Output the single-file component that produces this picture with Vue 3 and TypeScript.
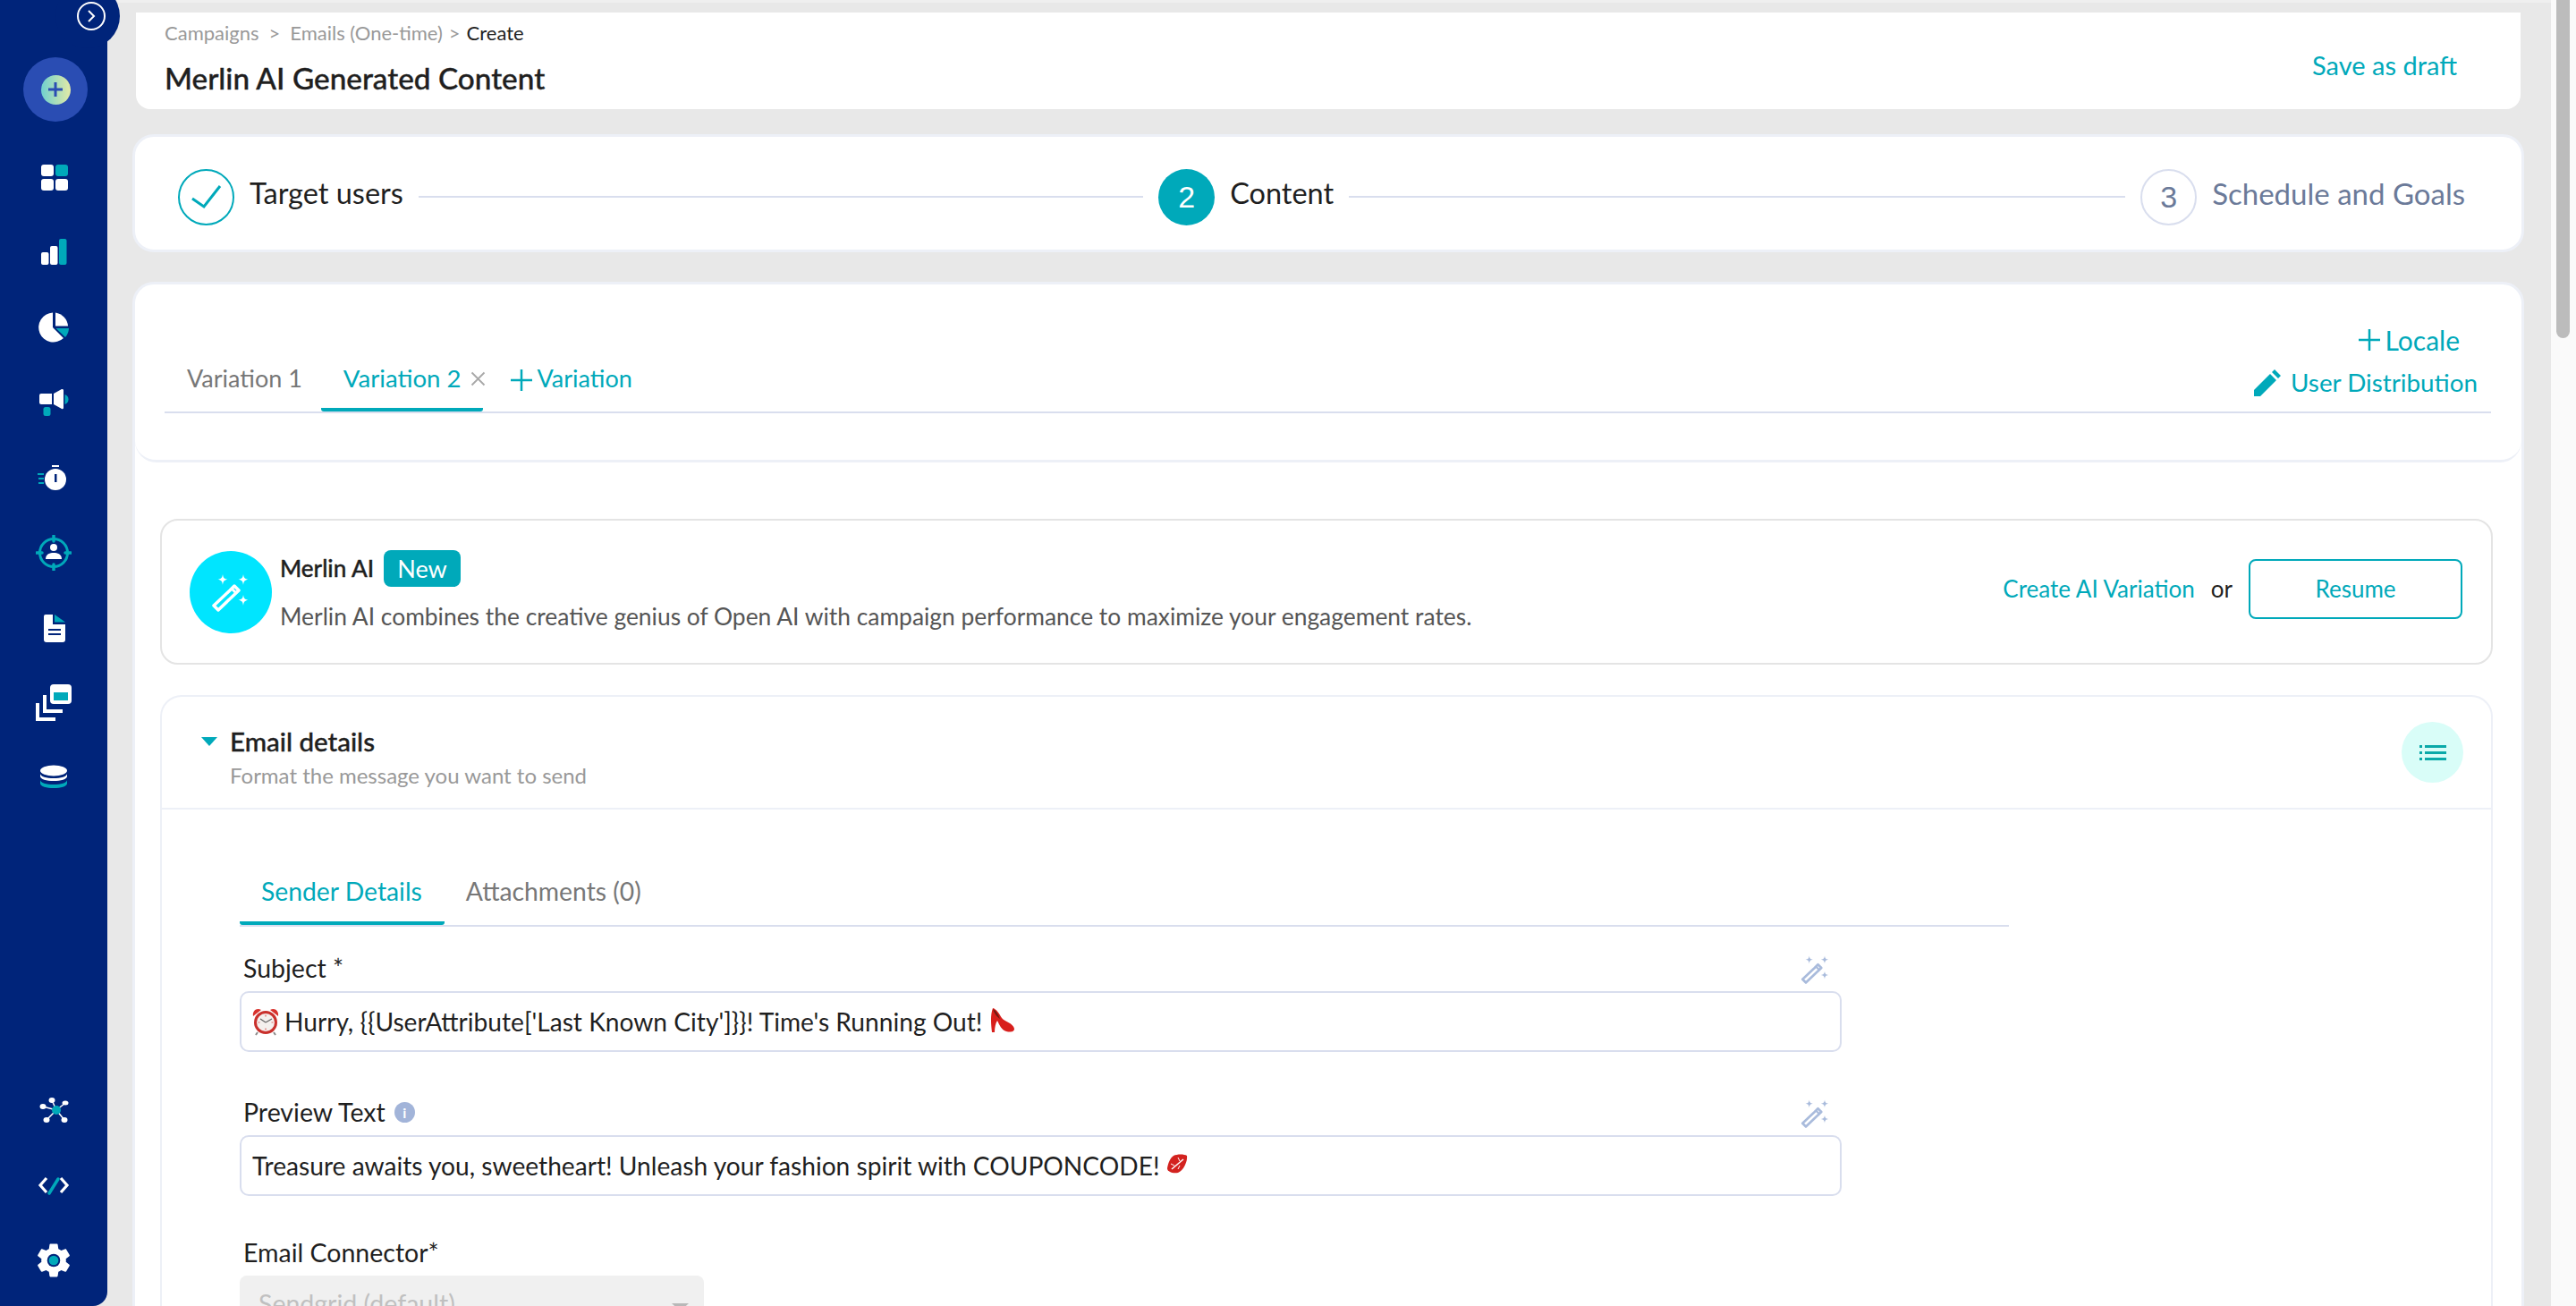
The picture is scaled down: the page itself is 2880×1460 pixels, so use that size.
<script setup lang="ts">
import { ref } from 'vue'

const activeVariation = ref(2)
const activeDetailTab = ref('Sender Details')
const detailTabs = ['Sender Details', 'Attachments (0)']
</script>

<template>
  <div class="page">
    <svg class="defs" width="0" height="0">
      <symbol id="wand" viewBox="0 0 44 44">
        <path d="M21 20 26 15 31 20 8 42 3 37Z" fill="none" stroke="currentColor" stroke-width="3.500" stroke-linejoin="round" />
        <path d="M23 18 28 23" stroke="currentColor" stroke-width="3" />
        <path d="M13 2C13.600 6 14.500 7 18.500 7.800 14.500 8.600 13.600 9.600 13 14 12.400 9.600 11.500 8.600 7.500 7.800 11.500 7 12.400 6 13 2Z" fill="currentColor" />
        <path d="M36 2C36.600 6 37.500 7 41.500 7.800 37.500 8.600 36.600 9.600 36 14 35.400 9.600 34.500 8.600 30.500 7.800 34.500 7 35.400 6 36 2Z" fill="currentColor" />
        <path d="M36 25C36.600 29 37.500 30 41.500 30.800 37.500 31.600 36.600 32.600 36 37 35.400 32.600 34.500 31.600 30.500 30.800 34.500 30 35.400 29 36 25Z" fill="currentColor" />
      </symbol>
    </svg>

    <aside class="sidebar">
      <div class="toggle-bump">
        <span class="toggle">
          <svg width="12" height="16" viewBox="0 0 12 16"><path d="M3 2 9 8 3 14" fill="none" stroke="#fff" stroke-width="2" /></svg>
        </span>
      </div>
      <div class="add-wrap">
        <span class="add-btn">
          <svg width="20" height="20" viewBox="0 0 20 20"><path d="M10 2V18M2 10H18" stroke="#2a4db3" stroke-width="3" /></svg>
        </span>
      </div>

      <nav class="nav">
        <a class="nav-item">
          <svg width="40" height="40" viewBox="0 0 40 40">
            <rect x="6" y="6" width="14" height="13" rx="3" fill="#fff" />
            <rect x="22" y="6" width="14" height="13" rx="3" fill="#00a9ba" />
            <rect x="6" y="22" width="14" height="13" rx="3" fill="#fff" />
            <rect x="22" y="22" width="14" height="13" rx="3" fill="#fff" />
          </svg>
        </a>
        <a class="nav-item">
          <svg width="40" height="40" viewBox="0 0 40 40">
            <rect x="6" y="20" width="8.500" height="14" rx="2" fill="#fff" />
            <rect x="16" y="13" width="8.500" height="21" rx="2" fill="#fff" />
            <rect x="26" y="5" width="8.500" height="29" rx="2" fill="#00a9ba" />
          </svg>
        </a>
        <a class="nav-item">
          <svg width="40" height="40" viewBox="0 0 40 40">
            <path d="M19 3.500A16.500 16.500 0 1 0 31 32L19 20Z" fill="#fff" />
            <path d="M22 3.500A16.500 16.500 0 0 1 36 18.500H22Z" fill="#fff" />
            <path d="M22.500 21H37A16 16 0 0 1 33 31Z" fill="#00a9ba" />
          </svg>
        </a>
        <a class="nav-item">
          <svg width="40" height="40" viewBox="0 0 40 40">
            <path d="M6 10H18V22H6A2 2 0 0 1 4 20V12A2 2 0 0 1 6 10Z" fill="#fff" />
            <path d="M20 10 29 5A1.500 1.500 0 0 1 31 6.500V26A1.500 1.500 0 0 1 29 27L20 22Z" fill="#fff" />
            <path d="M32.500 11C35.500 12 36.500 14 36.500 16.500 36.500 19 35.500 21 32.500 22Z" fill="#00a9ba" />
            <rect x="8.500" y="25" width="8" height="10" rx="2.500" fill="#00a9ba" />
          </svg>
        </a>
        <a class="nav-item">
          <svg width="40" height="40" viewBox="0 -3 40 40">
            <circle cx="22" cy="19" r="12" fill="#fff" />
            <rect x="18" y="3" width="8" height="2" fill="#fff" />
            <rect x="21" y="13" width="2.500" height="9" fill="#00247a" />
            <path d="M2 13H9M3 18H9M3 23H9" stroke="#00a9ba" stroke-width="1.800" />
          </svg>
        </a>
        <a class="nav-item">
          <svg width="40" height="40" viewBox="0 0 40 40">
            <circle cx="20" cy="20" r="15.500" fill="none" stroke="#00a9ba" stroke-width="3" />
            <path d="M20 1V7M20 33V39M1 20H7M33 20H39" stroke="#00a9ba" stroke-width="3.500" stroke-linecap="round" />
            <circle cx="20" cy="14" r="4" fill="#fff" />
            <path d="M11 27C11 21 16 20 20 20 24 20 29 21 29 27Z" fill="#fff" />
          </svg>
        </a>
        <a class="nav-item">
          <svg width="40" height="40" viewBox="0 0 40 40">
            <path d="M11 5H19V16H33V33A3 3 0 0 1 30 36H12A3 3 0 0 1 9 33V7A2 2 0 0 1 11 5Z" fill="#fff" />
            <path d="M21 5 33 13.500H21Z" fill="#00a9ba" />
            <rect x="14" y="21" width="14" height="2" fill="#00247a" />
            <rect x="14" y="26" width="14" height="2" fill="#00247a" />
          </svg>
        </a>
        <a class="nav-item">
          <svg width="40" height="42" viewBox="0 0 40 42">
            <rect x="16" y="0" width="24" height="22" rx="4" fill="#fff" />
            <rect x="20" y="9" width="16" height="9" fill="#00a9ba" />
            <path d="M10 12V30H30M2 21V39H22" fill="none" stroke="#fff" stroke-width="4" />
          </svg>
        </a>
        <a class="nav-item">
          <svg width="40" height="40" viewBox="0 0 40 40">
            <ellipse cx="20" cy="11.500" rx="15" ry="6" fill="#fff" />
            <path d="M5 15V18C5 21 12 23 20 23S35 21 35 18V15C35 18 28 20 20 20S5 18 5 15Z" fill="#fff" />
            <path d="M5 22V26C5 29 12 31 20 31S35 29 35 26V22C35 25 28 27 20 27S5 25 5 22Z" fill="#00a9ba" />
          </svg>
        </a>
      </nav>

      <nav class="nav nav-bottom">
        <a class="nav-item">
          <svg width="40" height="40" viewBox="0 0 40 40">
            <path d="M23 20 8 16M23 20 18 9M23 20 33 12M23 20 12 31M23 20 32 31" stroke="#fff" stroke-width="1.500" />
            <ellipse cx="8" cy="16" rx="3.500" ry="3" fill="#fff" />
            <ellipse cx="18" cy="9" rx="3.500" ry="3" fill="#fff" />
            <ellipse cx="33" cy="12" rx="3.500" ry="2.500" fill="#fff" />
            <ellipse cx="12" cy="31" rx="3.500" ry="3" fill="#fff" />
            <ellipse cx="32" cy="31" rx="3.500" ry="3" fill="#fff" />
            <circle cx="23" cy="20" r="5" fill="#00a9ba" />
          </svg>
        </a>
        <a class="nav-item">
          <svg width="40" height="40" viewBox="0 0 40 40">
            <path d="M12 12 5 20 12 28M28 12 35 20 28 28" fill="none" stroke="#fff" stroke-width="3.200" />
            <path d="M15 29 25 13" stroke="#00a9ba" stroke-width="3.500" stroke-linecap="round" />
          </svg>
        </a>
        <a class="nav-item">
          <svg width="46" height="46" viewBox="0 0 24 24">
            <path fill="#fff" d="M19.140 12.940c.04-.3.06-.61.06-.94 0-.32-.02-.64-.07-.94l2.030-1.580c.18-.14.23-.41.12-.61l-1.920-3.320c-.12-.22-.37-.29-.59-.22l-2.390.96c-.5-.38-1.030-.7-1.620-.94l-.36-2.540c-.04-.24-.24-.41-.48-.41h-3.840c-.24 0-.43.17-.47.41l-.36 2.540c-.59.24-1.130.57-1.620.94l-2.390-.96c-.22-.08-.47 0-.59.22L2.740 8.870c-.12.21-.08.47.12.61l2.030 1.580c-.05.3-.09.63-.09.94s.02.64.07.94l-2.030 1.580c-.18.14-.23.41-.12.61l1.920 3.320c.12.22.37.29.59.22l2.390-.96c.5.38 1.030.7 1.620.94l.36 2.540c.05.24.24.41.48.41h3.840c.24 0 .44-.17.47-.41l.36-2.540c.59-.24 1.130-.56 1.620-.94l2.390.96c.22.08.47 0 .59-.22l1.920-3.320c.12-.22.07-.47-.12-.61l-2.010-1.580z" />
            <circle cx="12" cy="12" r="3.800" fill="#00247a" />
            <circle cx="12" cy="12" r="2.800" fill="#00a9ba" />
          </svg>
        </a>
      </nav>
    </aside>

    <main class="main">
      <header class="top-card">
        <div>
          <div class="crumbs">
            <span>Campaigns</span><span class="sep">&gt;</span><span>Emails (One-time)</span><span class="sep2">&gt;</span><span class="crumb-now">Create</span>
          </div>
          <h1 class="title">Merlin AI Generated Content</h1>
        </div>
        <a class="draft">Save as draft</a>
      </header>

      <section class="stepper">
        <span class="step-circle done">
          <svg width="36" height="28" viewBox="0 0 36 28"><path d="M2 16 15 25 33 2" fill="none" stroke="#00a9ba" stroke-width="3" /></svg>
        </span>
        <span class="step-label">Target users</span>
        <span class="step-line line-a"></span>
        <span class="step-circle current">2</span>
        <span class="step-label">Content</span>
        <span class="step-line line-b"></span>
        <span class="step-circle todo">3</span>
        <span class="step-label muted">Schedule and Goals</span>
      </section>

      <section class="panel">
        <div class="variation-head">
          <div class="variation-row">
            <div class="variation-tabs">
              <a class="vtab" :class="{ active: activeVariation === 1 }" @click="activeVariation = 1">Variation 1</a>
              <a class="vtab" :class="{ active: activeVariation === 2 }" @click="activeVariation = 2">
                Variation 2
                <svg class="vtab-close" width="17" height="17" viewBox="0 0 17 17"><path d="M1.500 1.500 15.500 15.500M15.500 1.500 1.500 15.500" stroke="#a8a8a8" stroke-width="1.800" /></svg>
              </a>
              <a class="add-variation">
                <svg width="24" height="24" viewBox="0 0 24 24"><path d="M12 0V24M0 12H24" stroke="#00a9ba" stroke-width="2.500" /></svg>
                Variation
              </a>
            </div>
            <div class="variation-actions">
              <a class="locale">
                <svg width="24" height="24" viewBox="0 0 24 24"><path d="M12 0V24M0 12H24" stroke="#00a9ba" stroke-width="2.500" /></svg>
                Locale
              </a>
              <a class="distribution">
                <svg width="30" height="30" viewBox="0 0 30 30"><path d="M0 30V23L18 5 25 12 7 30ZM20 3 23 0 30 7 27 10Z" fill="#00a9ba" /></svg>
                User Distribution
              </a>
            </div>
          </div>
        </div>

        <div class="panel-body">
          <div class="merlin">
            <span class="merlin-icon">
              <svg class="merlin-wand" width="44" height="44"><use href="#wand" /></svg>
            </span>
            <div class="merlin-text">
              <div class="merlin-name">Merlin AI <span class="badge">New</span></div>
              <p class="merlin-desc">Merlin AI combines the creative genius of Open AI with campaign performance to maximize your engagement rates.</p>
            </div>
            <a class="create-ai">Create AI Variation</a>
            <span class="or">or</span>
            <button class="resume">Resume</button>
          </div>

          <div class="details">
            <div class="details-head">
              <svg class="caret" width="18" height="10" viewBox="0 0 18 10"><path d="M0 0H18L9 10Z" fill="#00a9ba" /></svg>
              <div class="details-text">
                <div class="details-title">Email details</div>
                <div class="details-sub">Format the message you want to send</div>
              </div>
              <span class="list-btn">
                <svg width="30" height="17" viewBox="0 0 30 17" fill="#0aa9a9">
                  <rect x="0" y="0" width="3" height="3" /><rect x="6" y="0" width="24" height="3" />
                  <rect x="0" y="7" width="3" height="3" /><rect x="6" y="7" width="24" height="3" />
                  <rect x="0" y="14" width="3" height="3" /><rect x="6" y="14" width="24" height="3" />
                </svg>
              </span>
            </div>

            <div class="details-body">
              <div class="detail-tabs">
                <a
                  v-for="tab in detailTabs"
                  :key="tab"
                  class="dtab"
                  :class="{ active: activeDetailTab === tab }"
                  @click="activeDetailTab = tab"
                >{{ tab }}</a>
              </div>

              <div class="form">
                <div class="label-row first">
                  <label>Subject *</label>
                  <svg class="field-wand" width="33" height="33"><use href="#wand" /></svg>
                </div>
                <div class="input">
                  <svg class="emoji clock" width="30" height="32" viewBox="0 0 30 32">
                    <path d="M6 28 4 31M24 28 26 31" stroke="#8a8a8a" stroke-width="2" />
                    <path d="M1 10C0 4 5 0 10 3ZM29 10C30 4 25 0 20 3Z" fill="#d8312c" />
                    <circle cx="15" cy="17" r="13" fill="#c9302c" />
                    <circle cx="15" cy="17" r="10" fill="#f4f0ee" />
                    <path d="M15 17 9 13M15 17 22 13" stroke="#666" stroke-width="1.300" />
                    <path d="M15 8.500V10.500M15 23.500V25.500M6.500 17H8.500M21.500 17H23.500" stroke="#e06a66" stroke-width="1.200" />
                  </svg>
                  <span class="value">Hurry, &#123;&#123;UserAttribute['Last Known City']&#125;&#125;! Time's Running Out!</span>
                  <svg class="emoji heel" width="28" height="27" viewBox="0 0 28 27">
                    <path d="M3 0C7 1 10 6 13 11 16 15 26 17 27 23 27 27 22 27 18 26 13 25 10 18 8 14 6 17 5 22 5 27H2C1 17 0 8 3 0Z" fill="#d81f1c" />
                    <path d="M3 1C7 3 9 7 11 12 8 10 5 7 3 1Z" fill="#6e1a12" />
                  </svg>
                </div>

                <div class="label-row">
                  <label>Preview Text <span class="info">i</span></label>
                  <svg class="field-wand" width="33" height="33"><use href="#wand" /></svg>
                </div>
                <div class="input">
                  <span class="value">Treasure awaits you, sweetheart! Unleash your fashion spirit with COUPONCODE!</span>
                  <svg class="emoji kiss" width="24" height="22" viewBox="0 0 24 22">
                    <path d="M8 2C12 0 20 0 23 2 24 8 19 19 13 21 7 22 1 20 1 16 2 10 4 5 8 2Z" fill="#d3221f" />
                    <path d="M6 17 19 6" stroke="#fff" stroke-width="1.500" />
                    <path d="M13 4 15 8M5 11 9 13M13 17 15 13" stroke="#fff" stroke-width="1" />
                  </svg>
                </div>

                <label class="connector-label">Email Connector*</label>
                <div class="select">
                  <span>Sendgrid (default)</span>
                  <svg class="select-caret" width="19" height="9" viewBox="0 0 19 9"><path d="M0 0H19L9.500 9Z" fill="#b8b8b8" /></svg>
                </div>
              </div>
            </div>
          </div>
        </div>
      </section>
    </main>

    <div class="scrollbar"><span class="thumb"></span></div>
  </div>
</template>

<style>
html,
body {
  margin: 0;
  overflow: hidden;
}
</style>

<style scoped>
.page {
  display: flex;
  width: 2880px;
  height: 1460px;
  overflow: hidden;
  background: #e8e8e8;
  font-family: Lato, 'Open Sans', sans-serif;
  color: #1f1f1f;
}

.defs {
  position: absolute;
}

.sidebar {
  position: relative;
  flex: 0 0 120px;
  display: flex;
  flex-direction: column;
  background: #00247a;
  border-bottom-right-radius: 16px;
}

.toggle-bump {
  position: absolute;
  top: -18px;
  left: 62px;
  width: 72px;
  height: 72px;
  border-radius: 50%;
  background: #00247a;
  display: flex;
  align-items: center;
  justify-content: center;
}

.toggle {
  width: 28px;
  height: 28px;
  margin: 0 0 0 8px;
  border: 2px solid #fff;
  border-radius: 50%;
  display: flex;
  align-items: center;
  justify-content: center;
}

.add-wrap {
  margin: 64px 0 0 26px;
  width: 72px;
  height: 72px;
  border-radius: 50%;
  background: #2a4db3;
  display: flex;
  align-items: center;
  justify-content: center;
}

.add-btn {
  width: 33px;
  height: 33px;
  border-radius: 50%;
  background: linear-gradient(90deg, #6fd0cf, #e3eaa6);
  display: flex;
  align-items: center;
  justify-content: center;
}

.nav {
  margin-top: 20px;
  display: flex;
  flex-direction: column;
}

.nav-bottom {
  margin-top: auto;
  padding-bottom: 9px;
}

.nav-item {
  height: 84px;
  display: flex;
  align-items: center;
  justify-content: center;
}

.main {
  flex: 1;
  min-width: 0;
  height: 1460px;
  padding: 14px 30px 0 28px;
  box-sizing: border-box;
  overflow: hidden;
  box-shadow: inset 0 3px 0 #efefef;
}

.top-card {
  margin: 0 4px;
  height: 108px;
  box-sizing: border-box;
  padding: 10px 71px 0 32px;
  background: #fff;
  border-radius: 0 0 16px 16px;
  display: flex;
  justify-content: space-between;
}

.crumbs {
  display: flex;
  font-size: 22px;
  line-height: 26px;
  color: #999;
  white-space: nowrap;
}

.sep {
  margin: 0 11px;
}

.sep2 {
  margin: 0 7px;
}

.crumb-now {
  color: #222;
}

.title {
  margin: 18px 0 0;
  font-size: 33.300px;
  line-height: 38px;
  font-weight: 500;
  -webkit-text-stroke: 0.4px #1f1f1f;
  white-space: nowrap;
}

.draft {
  margin-top: 32px;
  font-size: 29px;
  line-height: 34px;
  color: #00a9ba;
}

.stepper {
  margin-top: 28px;
  height: 132px;
  box-sizing: border-box;
  padding: 8px 63px 0 48px;
  display: flex;
  align-items: center;
  gap: 17px;
  background: #fff;
  border: 3px solid #edf0f7;
  border-radius: 24px;
}

.step-circle {
  flex: 0 0 63px;
  height: 63px;
  box-sizing: border-box;
  border-radius: 50%;
  display: flex;
  align-items: center;
  justify-content: center;
  font-size: 34px;
  font-family: 'Liberation Sans', sans-serif;
}

.done {
  border: 2px solid #00a9ba;
}

.current {
  background: #00a9ba;
  color: #fff;
}

.todo {
  border: 2px solid #d9deee;
  color: #6b7a99;
}

.step-label {
  font-size: 32.500px;
  line-height: 40px;
  padding-bottom: 8px;
  white-space: nowrap;
}

.muted {
  font-size: 33px;
  color: #6b7a99;
}

.step-line {
  height: 2px;
  background: #d9deee;
}

.line-a {
  flex: 812 1 0;
}

.line-b {
  flex: 870 1 0;
}

.panel {
  margin-top: 33px;
  height: 1200px;
  box-sizing: border-box;
  background: #fff;
  border: 3px solid #edf0f7;
  border-bottom: 0;
  border-radius: 24px 24px 0 0;
}

.variation-head {
  height: 199px;
  box-sizing: border-box;
  padding: 0 34px 0 33px;
  border-bottom: 3px solid #edf0f7;
  border-radius: 0 0 24px 24px;
  display: flex;
  align-items: flex-end;
}

.variation-row {
  flex: 1;
  margin-bottom: 52px;
  display: flex;
  justify-content: space-between;
  align-items: flex-end;
  border-bottom: 2px solid #d9deee;
}

.variation-tabs {
  display: flex;
  align-items: flex-end;
}

.vtab {
  height: 55px;
  box-sizing: border-box;
  padding: 0 21px 0 25px;
  font-size: 27px;
  line-height: 36px;
  color: #777;
  display: flex;
  align-items: flex-start;
  white-space: nowrap;
  border-bottom: 4px solid transparent;
}

.vtab.active {
  font-size: 27.600px;
  color: #00a9ba;
  border-bottom-color: #00a9ba;
  border-radius: 0 0 3px 3px;
  padding-right: 0;
}

.vtab-close {
  margin: 10px -3px 0 10px;
}

.add-variation {
  height: 55px;
  margin-left: 31px;
  font-size: 27px;
  line-height: 36px;
  color: #00a9ba;
  display: flex;
  align-items: flex-start;
  gap: 6px;
  white-space: nowrap;
}

.add-variation svg {
  margin-top: 8px;
}

.variation-actions {
  display: flex;
  flex-direction: column;
  align-items: flex-end;
  padding-bottom: 14px;
  gap: 12px;
  color: #00a9ba;
  font-size: 27.800px;
  line-height: 36px;
}

.locale {
  display: flex;
  align-items: center;
  gap: 6px;
  margin-right: 35px;
  font-size: 30px;
}

.distribution {
  display: flex;
  align-items: center;
  gap: 11px;
  margin-right: 15px;
}

.panel-body {
  padding: 63px 32px 0 28px;
}

.merlin {
  height: 163px;
  box-sizing: border-box;
  padding: 0 32px 0 31px;
  border: 2px solid #e4e4e4;
  border-radius: 20px;
  display: flex;
  align-items: center;
}

.merlin-icon {
  flex: 0 0 92px;
  height: 92px;
  border-radius: 50%;
  background: #00e5ff;
  display: flex;
  align-items: center;
  justify-content: center;
}

.merlin-wand {
  color: #fff;
}

.merlin-text {
  flex: 1;
  margin-left: 9px;
  padding-bottom: 2px;
}

.merlin-name {
  display: flex;
  align-items: center;
  gap: 11px;
  font-size: 26px;
  font-weight: 500;
  line-height: 41px;
  -webkit-text-stroke: 0.4px #1f1f1f;
}

.badge {
  width: 86px;
  height: 41px;
  border-radius: 8px;
  background: #00a9ba;
  color: #fff;
  font-size: 27px;
  font-weight: 400;
  -webkit-text-stroke: 0;
  display: flex;
  align-items: center;
  justify-content: center;
}

.merlin-desc {
  margin: 15px 0 0;
  font-size: 26.400px;
  line-height: 36px;
  color: #555;
  white-space: nowrap;
}

.create-ai {
  margin-bottom: 7px;
  font-size: 26px;
  color: #00a9ba;
  white-space: nowrap;
}

.or {
  margin: 0 18px 7px;
  font-size: 26px;
}

.resume {
  width: 239px;
  height: 67px;
  margin-bottom: 7px;
  background: #fff;
  border: 2px solid #00a9ba;
  border-radius: 8px;
  color: #00a9ba;
  font-family: inherit;
  font-size: 26px;
}

.details {
  margin-top: 34px;
  height: 760px;
  border: 2px solid #edf0f7;
  border-bottom: 0;
  border-radius: 24px 24px 0 0;
}

.details-head {
  height: 126px;
  box-sizing: border-box;
  padding: 28px 31px 0 44px;
  border-bottom: 2px solid #edf0f7;
  display: flex;
  align-items: flex-start;
}

.caret {
  margin-top: 17px;
}

.details-text {
  flex: 1;
  margin-left: 14px;
}

.details-title {
  font-size: 29.500px;
  font-weight: 500;
  line-height: 44px;
  -webkit-text-stroke: 0.4px #1f1f1f;
}

.details-sub {
  font-size: 24px;
  line-height: 32px;
  color: #999;
}

.list-btn {
  width: 69px;
  height: 68px;
  border-radius: 50%;
  background: #d9fdf8;
  display: flex;
  align-items: center;
  justify-content: center;
}

.details-body {
  padding: 59px 0 0 87px;
}

.detail-tabs {
  width: 1978px;
  display: flex;
  border-bottom: 2px solid #d9deee;
}

.dtab {
  height: 70px;
  box-sizing: border-box;
  padding: 14px 25px 0 24px;
  font-size: 28.300px;
  line-height: 36px;
  color: #777;
  border-bottom: 4px solid transparent;
  white-space: nowrap;
}

.dtab.active {
  color: #00a9ba;
  border-bottom-color: #00a9ba;
  border-radius: 0 0 3px 3px;
}

.form {
  width: 1791px;
  font-size: 28.500px;
}

.label-row {
  margin-top: 52px;
  height: 33px;
  padding: 0 13px 0 4px;
  display: flex;
  justify-content: space-between;
  align-items: center;
}

.label-row.first {
  margin-top: 31px;
}

.label-row label {
  margin-bottom: 3px;
  display: flex;
  align-items: center;
  gap: 10px;
}

.field-wand {
  color: #a9bbdc;
}

.info {
  width: 23px;
  height: 23px;
  border-radius: 50%;
  background: #a2b4d9;
  color: #fff;
  font-size: 16px;
  font-weight: 700;
  display: inline-flex;
  align-items: center;
  justify-content: center;
}

.input {
  margin-top: 8px;
  height: 68px;
  box-sizing: border-box;
  padding: 0 12px;
  border: 2px solid #d9deee;
  border-radius: 10px;
  display: flex;
  align-items: center;
  font-size: 28.150px;
  white-space: nowrap;
}

.clock {
  margin-right: 6px;
}

.heel {
  margin: -4px 0 0 9px;
}

.kiss {
  margin: -4px 0 0 8px;
}

.connector-label {
  display: block;
  margin: 46px 0 9px 4px;
  line-height: 34px;
}

.select {
  width: 519px;
  height: 70px;
  box-sizing: border-box;
  padding: 14px 17px 0 21px;
  border-radius: 8px;
  background: #f0f0f0;
  color: #c0c0c0;
  line-height: 34px;
  display: flex;
  justify-content: space-between;
  align-items: flex-start;
}

.select-caret {
  margin-top: 17px;
}

.scrollbar {
  flex: 0 0 28px;
  padding: 0 7px 0 6px;
  box-sizing: border-box;
  background: #fafafa;
}

.thumb {
  display: block;
  height: 378px;
  border-radius: 0 0 8px 8px;
  background: #bcbcbc;
}
</style>
